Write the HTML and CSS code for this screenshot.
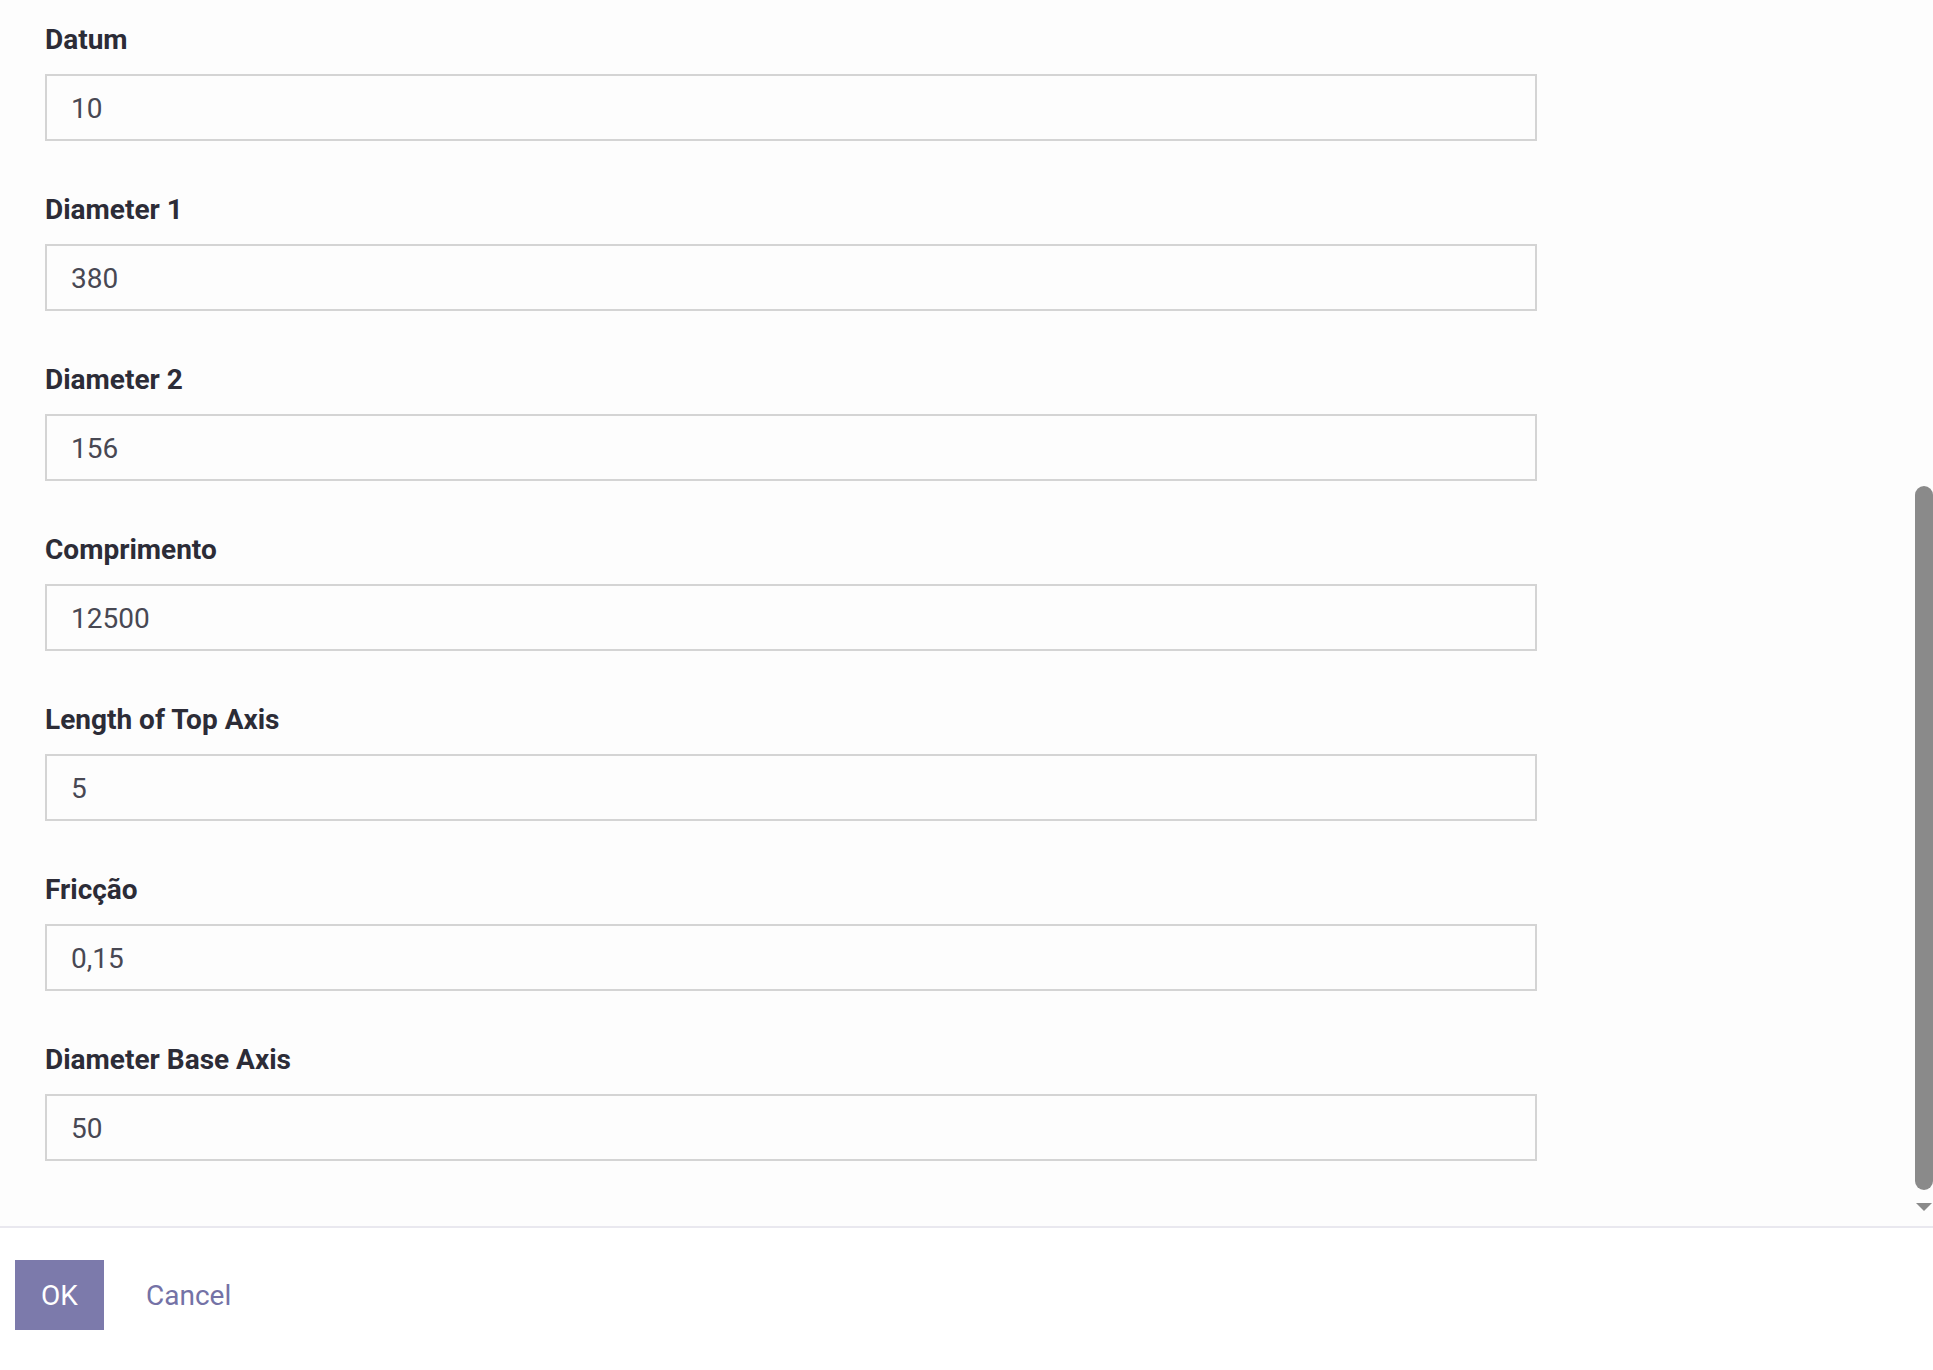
FILE: index.html
```html
<!DOCTYPE html>
<html lang="pt">
<head>
<meta charset="utf-8">
<title>Dialog</title>
<link rel="stylesheet" href="styles.css">
</head>
<body>
<div class="dialog">
  <div class="scroll-area">
    <form class="form">
      <div class="field">
        <label class="label">Datum</label>
        <div class="input">10</div>
      </div>
      <div class="field">
        <label class="label">Diameter 1</label>
        <div class="input">380</div>
      </div>
      <div class="field">
        <label class="label">Diameter 2</label>
        <div class="input">156</div>
      </div>
      <div class="field">
        <label class="label">Comprimento</label>
        <div class="input">12500</div>
      </div>
      <div class="field">
        <label class="label">Length of Top Axis</label>
        <div class="input">5</div>
      </div>
      <div class="field">
        <label class="label">Fricção</label>
        <div class="input">0,15</div>
      </div>
      <div class="field">
        <label class="label">Diameter Base Axis</label>
        <div class="input">50</div>
      </div>
    </form>
    <div class="scrollbar">
      <div class="thumb"></div>
      <div class="arrow"></div>
    </div>
  </div>
  <div class="footer">
    <button class="btn-ok" type="button">OK</button>
    <button class="btn-cancel" type="button">Cancel</button>
  </div>
</div>
</body>
</html>
```

FILE: styles.css
```css
html, body {
  margin: 0;
  padding: 0;
  background: #fdfdfd;
}

body {
  font-family: Roboto, "Noto Sans", "Liberation Sans", sans-serif;
  font-size: 28px;
  width: 1933px;
  height: 1370px;
  overflow: hidden;
}

.dialog {
  display: flex;
  flex-direction: column;
  height: 1370px;
}

.scroll-area {
  display: flex;
  height: 1226px;
  flex: none;
}

.form {
  flex: 1;
  padding: 23px 0 0 45px;
  margin: 0;
}

.field {
  display: flex;
  flex-direction: column;
  margin-bottom: 52px;
}

.label {
  font-weight: 700;
  color: #2c2c37;
  line-height: 34px;
  height: 34px;
  margin-bottom: 17px;
}

.input {
  box-sizing: border-box;
  width: 1492px;
  height: 67px;
  border: 2px solid #d4d4d4;
  background: #fdfdfd;
  color: #484853;
  line-height: 61px;
  padding: 2px 0 0 24px;
}

.scrollbar {
  width: 18px;
  flex: none;
  display: flex;
  flex-direction: column;
  align-items: center;
  padding-top: 486px;
}

.thumb {
  width: 18px;
  height: 704px;
  border-radius: 9px;
  background: #8a8a8a;
}

.arrow {
  margin-top: 13px;
  width: 0;
  height: 0;
  border-left: 8px solid transparent;
  border-right: 8px solid transparent;
  border-top: 8px solid #8a8a8a;
}

.footer {
  border-top: 2px solid #e9e8ef;
  display: flex;
  align-items: flex-start;
  padding: 32px 0 0 15px;
  flex: 1;
  background: #ffffff;
}

.btn-ok {
  font-family: inherit;
  font-size: 28px;
  background: #7c7aab;
  color: #ffffff;
  border: none;
  width: 89px;
  height: 70px;
  padding: 0;
  cursor: pointer;
}

.btn-cancel {
  font-family: inherit;
  font-size: 28px;
  background: transparent;
  color: #7472a6;
  border: none;
  height: 70px;
  padding: 0;
  margin-left: 42px;
  cursor: pointer;
}
```
